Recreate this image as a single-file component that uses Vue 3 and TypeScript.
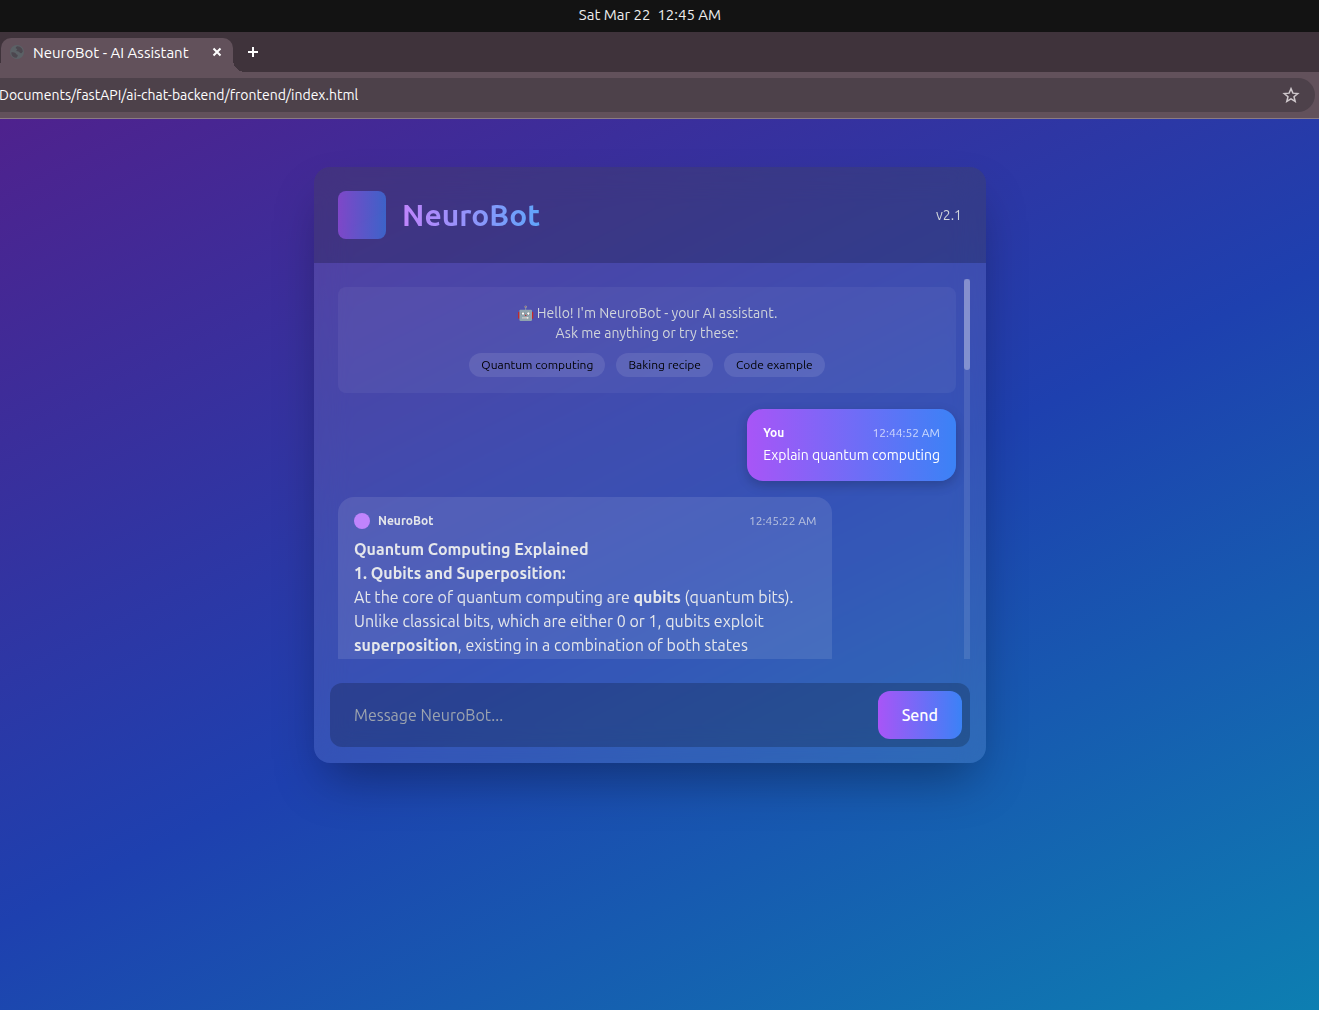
<script setup lang="ts">
import { ref } from 'vue'

interface Span {
  text: string
  strong?: boolean
}

const draft = ref('')
const suggestions: string[] = ['Quantum computing', 'Baking recipe', 'Code example']
const answer: Span[][] = [
  [{ text: 'Quantum Computing Explained', strong: true }],
  [{ text: '1. Qubits and Superposition:', strong: true }],
  [{ text: 'At the core of quantum computing are ' }, { text: 'qubits', strong: true }, { text: ' (quantum bits).' }],
  [{ text: 'Unlike classical bits, which are either 0 or 1, qubits exploit' }],
  [{ text: 'superposition', strong: true }, { text: ', existing in a combination of both states' }],
]

function suggest(text: string): void {
  draft.value = text
}
</script>

<template>
  <div class="screen">
    <div class="topbar">
      <time>Sat Mar 22&nbsp; 12:45 AM</time>
    </div>

    <div class="tabstrip">
      <div class="tab">
        <svg class="globe" viewBox="0 0 16 16" aria-hidden="true">
          <circle cx="8" cy="8" r="7" fill="#5b6166" />
          <path d="M2.200 8.400c1.600-.4 3.200-.2 4.200.6.8.6.4 1.400 1.400 1.600 1 .2 1.200 1 .6 1.800l-.8 1.400A5.800 5.800 0 0 1 2.200 8.400zM8.600 2.200c-1.200.4-2.200 1.200-1.800 2 .4.6 1.400.2 1.400 1s-1 .8-.8 1.600c.4 1 1.800.4 2.600 1 .8.6 1.200 1.600 2.200 1.400.8-.2 1-1 1.600-1.400A5.800 5.800 0 0 0 8.600 2.200z" fill="#4c474f" />
        </svg>
        <span class="tab-title">NeuroBot - AI Assistant</span>
        <button class="tab-close" aria-label="Close tab">
          <svg viewBox="0 0 12 12"><path d="M2.500 2.500l7 7M9.500 2.500l-7 7" /></svg>
        </button>
      </div>
      <button class="new-tab" aria-label="New tab">
        <svg viewBox="0 0 12 12"><path d="M6 1v10M1 6h10" /></svg>
      </button>
    </div>

    <div class="toolbar">
      <div class="address">
        <span>Documents/fastAPI/ai-chat-backend/frontend/index.html</span>
        <button class="star" aria-label="Bookmark this page">
          <svg viewBox="0 0 24 24"><path d="M12 3.500l2.500 6 6.500.5-5 4.200 1.600 6.300-5.600-3.400-5.600 3.400L8 14.200 3 10l6.500-.5z" /></svg>
        </button>
      </div>
    </div>

    <main class="page">
      <section class="card">
        <header class="card-head">
          <div class="logo"></div>
          <h1>NeuroBot</h1>
          <span class="version">v2.1</span>
        </header>

        <div class="chat">
          <div class="messages">
            <div class="welcome">
              <p>🤖 Hello! I'm NeuroBot - your AI assistant.<br />Ask me anything or try these:</p>
              <div class="chips">
                <button v-for="s in suggestions" :key="s" @click="suggest(s)">{{ s }}</button>
              </div>
            </div>

            <article class="bubble user">
              <div class="meta"><strong>You</strong><time>12:44:52 AM</time></div>
              <p>Explain quantum computing</p>
            </article>

            <article class="bubble bot">
              <div class="meta"><i class="dot"></i><strong>NeuroBot</strong><time>12:45:22 AM</time></div>
              <p v-for="(line, i) in answer" :key="i">
                <component :is="part.strong ? 'strong' : 'span'" v-for="(part, j) in line" :key="j">{{ part.text }}</component>
              </p>
            </article>
          </div>
          <div class="track"><div class="thumb"></div></div>
        </div>

        <form class="composer" @submit.prevent>
          <input v-model="draft" type="text" placeholder="Message NeuroBot..." aria-label="Message NeuroBot" />
          <button type="submit">Send</button>
        </form>
      </section>
    </main>
  </div>
</template>

<style>
body {
  margin: 0;
  overflow-x: hidden;
}
</style>

<style scoped>
* {
  box-sizing: border-box;
}
.screen {
  display: flex;
  flex-direction: column;
  min-height: 100vh;
  /* the window continues past the left edge of the screen */
  margin-left: -19px;
  font-family: Ubuntu, 'Noto Sans', sans-serif;
  font-size: 14px;
  color: #fff;
}
button {
  border: 0;
  padding: 0;
  background: none;
  color: inherit;
  font: inherit;
  cursor: pointer;
}
svg {
  display: block;
}
p,
h1 {
  margin: 0;
}
.topbar {
  height: 32px;
  background: #131313;
  color: #eee;
  font-size: 15px;
  line-height: 30px;
  text-align: center;
}
.tabstrip {
  display: flex;
  height: 40px;
  padding: 6px 0 0 20px;
  background: #3f333b;
}
.tab {
  position: relative;
  display: flex;
  align-items: center;
  width: 232px;
  padding: 0 10px 6px 8px;
  border-radius: 10px 10px 0 0;
  background: #62515b;
}
.tab::before,
.tab::after {
  content: '';
  position: absolute;
  bottom: 0;
  width: 12px;
  height: 12px;
}
.tab::before {
  right: 100%;
  background: radial-gradient(circle at 0 0, transparent 12px, #62515b 12px);
}
.tab::after {
  left: 100%;
  background: radial-gradient(circle at 100% 0, transparent 12px, #62515b 12px);
}
.globe {
  width: 16px;
  height: 16px;
}
.tab-title {
  flex: 1;
  margin-left: 8px;
  font-size: 15px;
  white-space: nowrap;
}
.tab-close svg {
  width: 12px;
  height: 12px;
}
.tab-close path,
.new-tab path {
  fill: none;
  stroke: #fff;
  stroke-width: 2;
}
.new-tab {
  align-self: flex-start;
  margin: 8px 0 0 14px;
}
.new-tab svg {
  width: 12px;
  height: 12px;
}
.toolbar {
  height: 47px;
  padding: 6px 4px 6px 0;
  border-bottom: 1px solid #8b7b84;
  background: #62515b;
}
.address {
  display: flex;
  align-items: center;
  justify-content: space-between;
  height: 34px;
  padding: 0 15px 0 18px;
  border-radius: 0 17px 17px 0;
  background: #4d414a;
}
.star svg {
  width: 18px;
  height: 18px;
}
.star path {
  fill: none;
  stroke: #cfc8cc;
  stroke-width: 2;
}
.page {
  flex: 1;
  padding: 48px 16px;
  background: linear-gradient(to bottom right, #581c87, #1e40af, #0891b2) 50% 0 / 144% 108%;
}
.card {
  max-width: 672px;
  margin: 0 auto;
  overflow: hidden;
  border-radius: 16px;
  background: rgba(255, 255, 255, 0.1);
  box-shadow: 0 25px 50px -12px rgba(0, 0, 0, 0.35);
  backdrop-filter: blur(16px);
}
.card-head {
  display: flex;
  align-items: center;
  gap: 16px;
  padding: 24px;
  background: rgba(0, 0, 0, 0.2);
}
.logo {
  width: 48px;
  height: 48px;
  border-radius: 8px;
  background: linear-gradient(to right, #a855f7, #3b82f6);
  opacity: 0.6;
}
h1 {
  background: linear-gradient(to right, #c084fc, #60a5fa);
  background-clip: text;
  color: transparent;
  font-size: 30px;
  line-height: 36px;
  font-weight: 600;
}
.version {
  margin-left: auto;
  color: #d1d5db;
  line-height: 20px;
}
.chat {
  display: flex;
  height: 380px;
  margin: 16px 16px 24px;
}
.messages {
  display: flex;
  flex: 1;
  flex-direction: column;
  gap: 16px;
  padding: 8px;
  overflow-y: auto;
  scrollbar-width: none;
}
.messages > * {
  flex-shrink: 0;
}
.track {
  width: 6px;
  background: rgba(255, 255, 255, 0.1);
}
.thumb {
  height: 24%;
  border-radius: 3px;
  background: rgba(255, 255, 255, 0.3);
}
.welcome {
  padding: 16px;
  border-radius: 8px;
  background: rgba(255, 255, 255, 0.05);
  color: #d1d5db;
  line-height: 20px;
  text-align: center;
}
.chips {
  display: flex;
  justify-content: center;
  gap: 11px;
  margin-top: 10px;
}
.chips button {
  padding: 4px 12px;
  border-radius: 12px;
  background: rgba(255, 255, 255, 0.1);
  color: #000;
  font-size: 12px;
  line-height: 16px;
}
.bubble {
  padding: 16px;
  border-radius: 16px;
}
.meta {
  display: flex;
  align-items: center;
  font-size: 12px;
  line-height: 16px;
}
.meta time {
  margin-left: auto;
  opacity: 0.7;
}
.user {
  align-self: flex-end;
  background: linear-gradient(to right, #a855f7, #3b82f6);
  box-shadow: 0 4px 12px rgba(0, 0, 0, 0.2);
  line-height: 20px;
}
.user .meta {
  margin-bottom: 4px;
}
.bot {
  width: 80%;
  background: rgba(255, 255, 255, 0.1);
  color: #e5e7eb;
  font-size: 16px;
  line-height: 24px;
}
.bot .meta {
  margin-bottom: 8px;
}
.bubble strong {
  font-weight: 600;
}
.dot {
  width: 16px;
  height: 16px;
  margin-right: 8px;
  border-radius: 50%;
  background: #c084fc;
}
.composer {
  display: flex;
  margin: 0 16px 16px;
  padding: 8px;
  border-radius: 12px;
  background: rgba(0, 0, 0, 0.2);
}
.composer input {
  flex: 1;
  min-width: 0;
  padding: 0 16px;
  border: 0;
  outline: 0;
  background: none;
  color: #fff;
  font: inherit;
  font-size: 16px;
}
.composer input::placeholder {
  color: #9ca3af;
}
.composer button {
  height: 48px;
  padding: 0 24px;
  border-radius: 12px;
  background: linear-gradient(to right, #a855f7, #3b82f6);
  font-size: 16px;
  font-weight: 500;
}
</style>
